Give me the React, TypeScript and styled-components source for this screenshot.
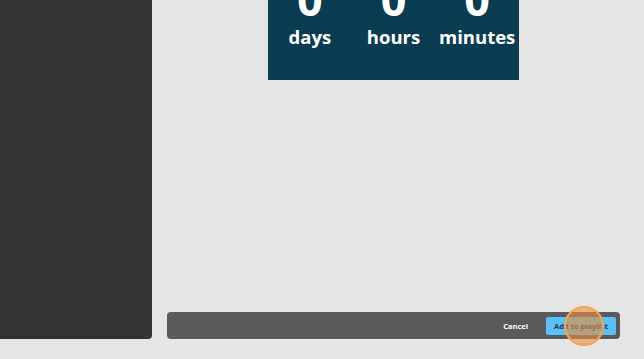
import styled, { createGlobalStyle } from 'styled-components';

const Global = createGlobalStyle`
  html, body { margin: 0; padding: 0; background: #e5e5e5; }
  body { font-family: "Open Sans", "Liberation Sans", sans-serif; }
  #root { height: 359px; overflow: hidden; }
`;

const Page = styled.div`
  display: flex;
  height: 359px;
`;

const Sidebar = styled.aside`
  width: 152px;
  height: 339px;
  background: #333333;
  border-bottom-right-radius: 4px;
  flex-shrink: 0;
`;

const Main = styled.main`
  flex: 1;
  display: flex;
  flex-direction: column;
  padding: 0 24px 20px 15px;
`;

const Preview = styled.div`
  flex: 1;
  display: flex;
  justify-content: center;
  align-items: flex-start;
  overflow: hidden;
`;

const Countdown = styled.div`
  width: 251px;
  height: 80px;
  background: #0a3d51;
  display: grid;
  grid-template-columns: repeat(3, 1fr);
  overflow: hidden;
`;

const Unit = styled.div`
  display: flex;
  flex-direction: column;
  align-items: center;
  color: #ffffff;
  font-weight: 700;
  margin-top: -24px;
`;

const Digit = styled.span`
  font-size: 45px;
  line-height: 45px;
`;

const Label = styled.span`
  font-size: 18.5px;
  line-height: 18.5px;
  margin-top: 7px;
`;

const ActionBar = styled.div`
  height: 27px;
  background: #5a5a5a;
  border-radius: 4px;
  display: flex;
  align-items: center;
  justify-content: flex-end;
  padding-right: 4px;
  gap: 18px;
`;

const TextButton = styled.button`
  background: none;
  border: none;
  padding: 0;
  color: #ffffff;
  font-family: inherit;
  font-weight: 700;
  font-size: 7.5px;
`;

const PrimaryButton = styled.button`
  position: relative;
  width: 70px;
  height: 18px;
  border: none;
  border-radius: 2px;
  background: #5bc0f6;
  color: #1d3848;
  font-family: inherit;
  font-weight: 700;
  font-size: 7.5px;
  padding: 0;
`;

const Pointer = styled.span`
  position: absolute;
  left: 18px;
  top: -11px;
  width: 36px;
  height: 36px;
  border-radius: 50%;
  background: rgba(238, 140, 60, 0.6);
  border: 2px solid #f0a45c;
  pointer-events: none;
`;

const units = ['days', 'hours', 'minutes'];

export default function App() {
  return (
    <>
      <Global />
      <Page>
        <Sidebar />
        <Main>
          <Preview>
            <Countdown>
              {units.map((u) => (
                <Unit key={u}>
                  <Digit>0</Digit>
                  <Label>{u}</Label>
                </Unit>
              ))}
            </Countdown>
          </Preview>
          <ActionBar>
            <TextButton>Cancel</TextButton>
            <PrimaryButton>
              Add to playlist
              <Pointer />
            </PrimaryButton>
          </ActionBar>
        </Main>
      </Page>
    </>
  );
}
